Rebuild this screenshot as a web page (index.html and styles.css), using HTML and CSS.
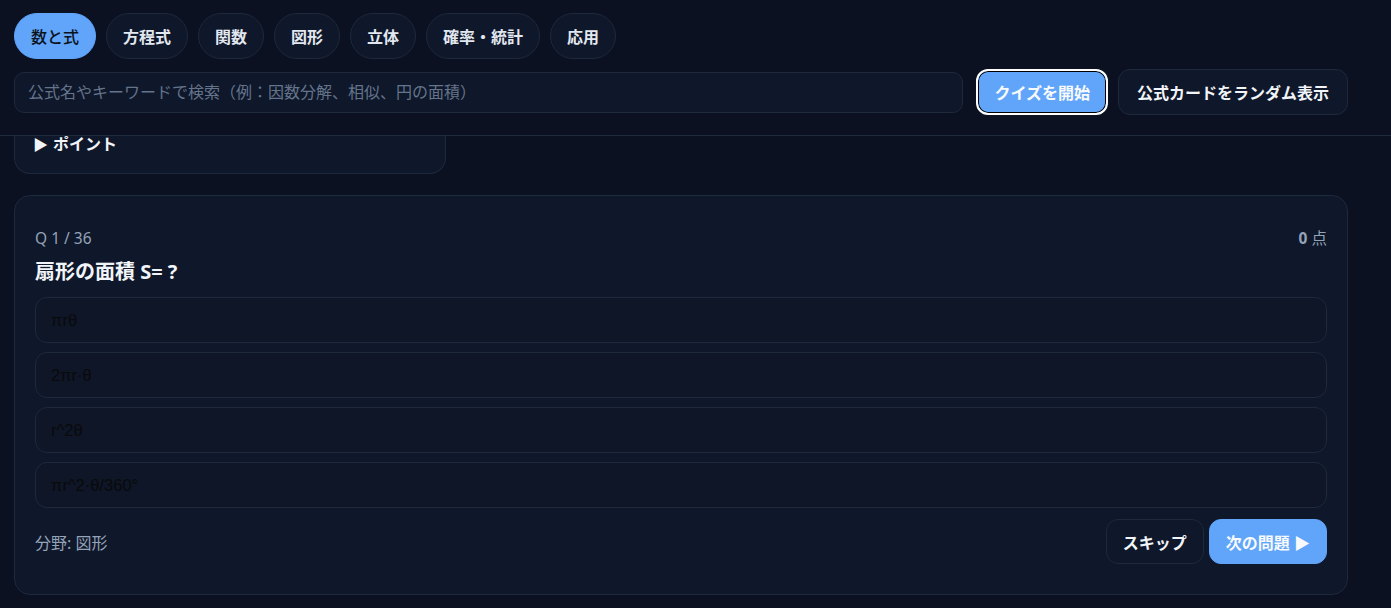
FILE: index.html
```html
<!DOCTYPE html>
<html lang="ja">
<head>
<meta charset="utf-8">
<title>公式クイズ</title>
<link rel="stylesheet" href="styles.css">
</head>
<body>
<header class="topbar">
  <div class="wrap">
    <nav class="tabs">
      <button class="tab active">数と式</button>
      <button class="tab">方程式</button>
      <button class="tab">関数</button>
      <button class="tab">図形</button>
      <button class="tab">立体</button>
      <button class="tab">確率・統計</button>
      <button class="tab">応用</button>
    </nav>
    <div class="search-row">
      <input class="search" type="text" placeholder="公式名やキーワードで検索（例：因数分解、相似、円の面積）">
      <button class="btn primary focus">クイズを開始</button>
      <button class="btn wide">公式カードをランダム表示</button>
    </div>
  </div>
</header>
<main class="wrap">
  <div class="point-card">
    <div class="summary"><span class="marker">▶</span>ポイント</div>
  </div>
  <section class="quiz">
    <div class="meta">
      <span>Q 1 / 36</span>
      <span><b>0</b> 点</span>
    </div>
    <h2 class="question">扇形の面積 S= ?</h2>
    <div class="options">
      <button class="option">πrθ</button>
      <button class="option">2πr·θ</button>
      <button class="option">r^2θ</button>
      <button class="option">πr^2·θ/360°</button>
    </div>
    <div class="quiz-foot">
      <span class="field">分野: 図形</span>
      <div class="actions">
        <button class="btn small">スキップ</button>
        <button class="btn small primary">次の問題 ▶</button>
      </div>
    </div>
  </section>
</main>
</body>
</html>
```
FILE: styles.css
```css
* { box-sizing: border-box; }
html, body { margin: 0; padding: 0; }
body {
  background: #0b1120;
  color: #e2e8f0;
  font-family: "Noto Sans", "Noto Sans CJK JP", sans-serif;
  height: 608px;
  overflow: hidden;
}
.wrap {
  max-width: 1362px;
  padding: 0 14px;
}
.topbar {
  background: #0b1120;
  border-bottom: 1px solid #1e293b;
  padding: 13px 0 20px;
}
.tabs {
  display: flex;
  gap: 10px;
}
.tab {
  height: 46px;
  padding: 0 16px;
  border-radius: 999px;
  border: 1px solid #1e293b;
  background: #0f172a;
  color: #e2e8f0;
  font-family: "Noto Sans", "Noto Sans CJK JP", sans-serif;
  font-size: 16px;
  font-weight: 700;
}
.tab.active {
  background: #60a5fa;
  border-color: #60a5fa;
  color: #0b1220;
  font-weight: 500;
}
.search-row {
  display: flex;
  align-items: center;
  gap: 10px;
  margin-top: 10px;
}
.search {
  flex: 1;
  height: 41px;
  margin-right: 3px;
  border: 1px solid #1e293b;
  background: #0f172a;
  border-radius: 10px;
  padding: 0 13px;
  color: #e2e8f0;
  font-family: "Noto Sans", "Noto Sans CJK JP", sans-serif;
  font-size: 16px;
}
.search::placeholder { color: #64748b; }
.btn {
  height: 46px;
  padding: 0 16px;
  border-radius: 12px;
  border: 1px solid #1e293b;
  background: #0f172a;
  color: #f1f5f9;
  font-family: "Noto Sans", "Noto Sans CJK JP", sans-serif;
  font-size: 16px;
  font-weight: 700;
  white-space: nowrap;
}
.btn.wide { padding: 0 18px; }
.btn.primary {
  background: #60a5fa;
  border-color: #60a5fa;
  color: #f8fafc;
}
.btn.focus {
  border: 2px solid #ffffff;
  box-shadow: inset 0 0 0 1px #000000;
  padding: 0 16px;
}
.point-card {
  width: 432px;
  background: #0f172a;
  border: 1px solid #1e293b;
  border-top: none;
  border-radius: 0 0 16px 16px;
  padding: 0 18px 21px;
}
.summary {
  line-height: 16px;
  font-size: 16px;
  font-weight: 700;
  color: #f1f5f9;
}
.marker {
  font-size: 15px;
  margin-right: 5px;
}
.quiz {
  margin-top: 21px;
  background: #0f172a;
  border: 1px solid #1e293b;
  border-radius: 16px;
  padding: 32px 20px 30px;
}
.meta {
  display: flex;
  justify-content: space-between;
  font-size: 15.5px;
  line-height: 20px;
  color: #94a3b8;
}
.meta b { font-weight: 700; }
.question {
  margin: 10px 0 11px;
  font-size: 20px;
  line-height: 28px;
  font-weight: 700;
  color: #f1f5f9;
}
.options {
  display: flex;
  flex-direction: column;
  gap: 9px;
}
.option {
  text-align: left;
  height: 46px;
  padding: 0 15px;
  border: 1px solid #1e293b;
  border-radius: 12px;
  background: #0e1628;
  color: #0a0a0a;
  font-family: "Liberation Sans", Arial, sans-serif;
  font-size: 16.5px;
}
.quiz-foot {
  margin-top: 11px;
  display: flex;
  justify-content: space-between;
  align-items: center;
}
.field {
  font-size: 16px;
  color: #94a3b8;
}
.actions {
  display: flex;
  gap: 5px;
}
.btn.small { height: 45px; }
```
